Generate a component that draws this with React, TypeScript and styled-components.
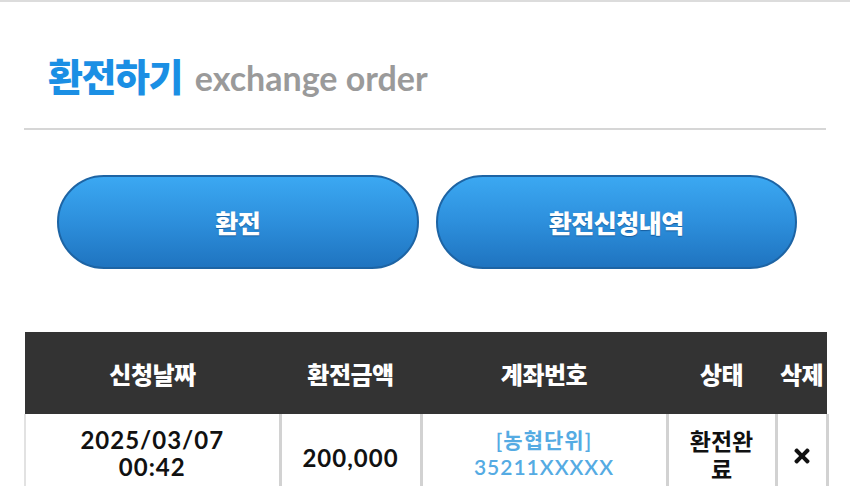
import React from "react"
import styled, {createGlobalStyle} from "styled-components";
import {FaTimes} from "react-icons/fa";

const GlobalStyle = createGlobalStyle`
  html, body {
    margin: 0;
    padding: 0;
    background: #fff;
  }
  body {
    font-family: "Noto Sans CJK KR", "Noto Sans", sans-serif;
    border-top: 2px solid #dcdcdc;
    overflow: hidden;
  }
`

const Page = styled.div`
  width: 802px;
  margin: 0 24px;
`

const TitleBar = styled.div`
  display: flex;
  align-items: baseline;
  gap: 13px;
  height: 128px;
  padding-left: 24px;
  padding-top: 54px;
  box-sizing: border-box;
  border-bottom: 2px solid #d6d6d6;
`

const Title = styled.h1`
  margin: 0;
  font-size: 38px;
  font-weight: 900;
  color: #1b8fe4;
  letter-spacing: -1.5px;
  line-height: 1;
`

const SubTitle = styled.span`
  font-family: "Lato", "Noto Sans", sans-serif;
  font-size: 34px;
  font-weight: 700;
  color: #9a9a9a;
  letter-spacing: 0;
  line-height: 1;
`

const ButtonRow = styled.div`
  display: grid;
  grid-template-columns: 1fr 1fr;
  gap: 17px;
  padding: 45px 29px 0 33px;
`

const PillButton = styled.button`
  height: 94px;
  border-radius: 47px;
  border: 2px solid #1d64a4;
  background: linear-gradient(to bottom, #3ba8f2 0%, #2d8fdc 50%, #1f74c0 100%);
  color: #fff;
  font-family: "Noto Sans CJK KR", sans-serif;
  font-size: 25px;
  font-weight: 900;
  letter-spacing: -0.5px;
  text-shadow: 0 1px 1px rgba(0, 40, 90, 0.45);
  cursor: pointer;
`

const Table = styled.table`
  margin-top: 63px;
  width: 802px;
  border-collapse: collapse;
  table-layout: fixed;
`

const HeadCell = styled.th<{ $w: number }>`
  width: ${p => p.$w}px;
  height: 82px;
  padding: 0;
  background: #333333;
  color: #fff;
  font-size: 24px;
  font-weight: 900;
  letter-spacing: -0.5px;
  text-align: center;
  white-space: nowrap;
`

const Cell = styled.td<{ $color?: string; $size?: number; $pad?: number; $weight?: number }>`
  padding: 12px ${p => p.$pad ?? 6}px 16px;
  height: 60px;
  text-align: center;
  vertical-align: top;
  border-left: 3px solid #d2d2d2;
  border-right: 3px solid #d2d2d2;
  color: ${p => p.$color ?? "#111"};
  font-family: "Lato", "Noto Sans CJK KR", sans-serif;
  font-size: ${p => p.$size ?? 24}px;
  font-weight: ${p => p.$weight ?? 700};
  letter-spacing: 1px;
  line-height: 27px;

  &:first-child {
    border-left: 2px solid #e2e2e2;
  }
`

// single-line values sit between the two lines of their neighbours
const MidLine = styled.div`
  padding-top: 18px;
`

const StatusText = styled.span`
  display: inline-block;
  max-width: 80px;
  font-family: "Noto Sans CJK KR", sans-serif;
  font-size: 23px;
  line-height: 28px;
  letter-spacing: 0;
  word-break: break-all;
`

const columns = [
    {label: "신청날짜", width: 255},
    {label: "환전금액", width: 141},
    {label: "계좌번호", width: 246},
    {label: "상태", width: 109},
    {label: "삭제", width: 51},
]

export default function App() {
    return (
        <>
            <GlobalStyle/>
            <Page>
                <TitleBar>
                    <Title>환전하기</Title>
                    <SubTitle>exchange order</SubTitle>
                </TitleBar>

                <ButtonRow>
                    <PillButton>환전</PillButton>
                    <PillButton>환전신청내역</PillButton>
                </ButtonRow>

                <Table>
                    <thead>
                    <tr>
                        {columns.map(c => (
                            <HeadCell key={c.label} $w={c.width}>{c.label}</HeadCell>
                        ))}
                    </tr>
                    </thead>
                    <tbody>
                    <tr>
                        <Cell>2025/03/07<br/>00:42</Cell>
                        <Cell><MidLine>200,000</MidLine></Cell>
                        <Cell $color="#55abe3" $size={21} $weight={600}>[농협단위]<br/>35211XXXXX</Cell>
                        <Cell><StatusText>환전완료</StatusText></Cell>
                        <Cell $pad={0}><MidLine><FaTimes size={22}/></MidLine></Cell>
                    </tr>
                    </tbody>
                </Table>
            </Page>
        </>
    )
}
